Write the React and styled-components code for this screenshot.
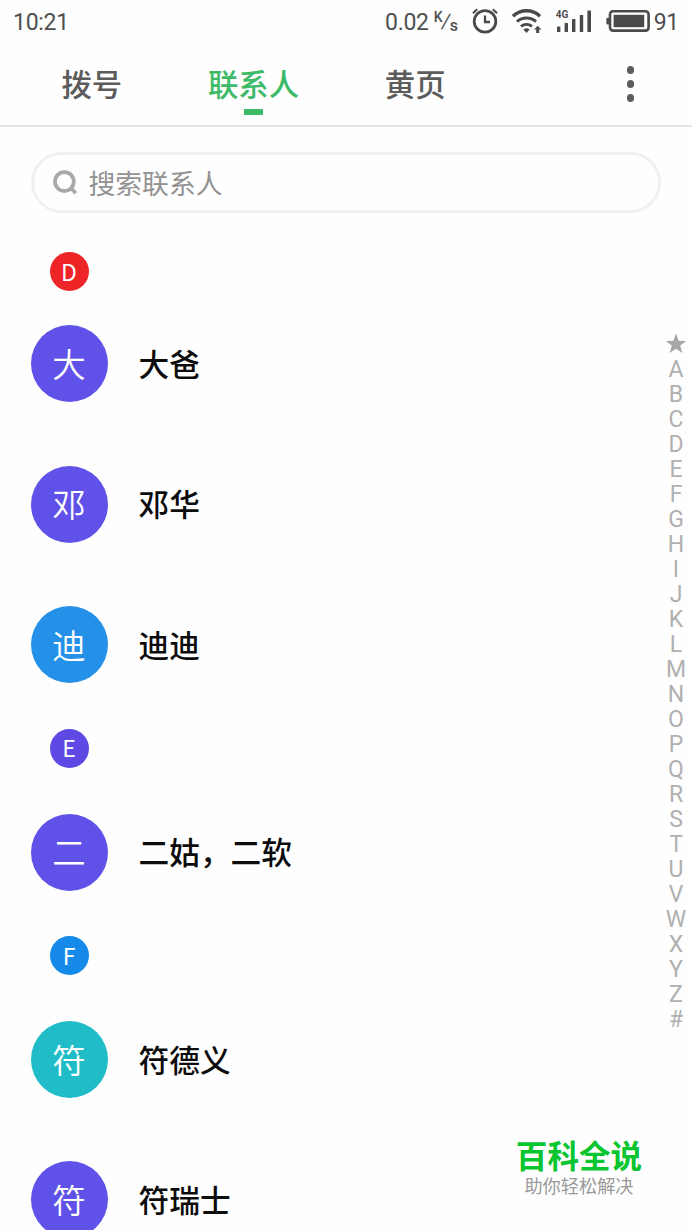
import React from "react";
import styled, { createGlobalStyle } from "styled-components";

const sections = [
  {
    letter: "D",
    color: "#ee2527",
    contacts: [
      { name: "大爸", color: "#6052e8" },
      { name: "邓华", color: "#6052e8" },
      { name: "迪迪", color: "#2590e8" },
    ],
  },
  {
    letter: "E",
    color: "#5f49e4",
    contacts: [{ name: "二姑，二软", color: "#6052e8" }],
  },
  {
    letter: "F",
    color: "#168ae8",
    contacts: [
      { name: "符德义", color: "#20bdc8" },
      { name: "符瑞士", color: "#6052e8" },
    ],
  },
];

const letters = "ABCDEFGHIJKLMNOPQRSTUVWXYZ#".split("");

function AlarmIcon() {
  return (
    <svg width="26" height="26" viewBox="0 0 26 26" fill="none" stroke="#4a4a4a">
      <circle cx="13" cy="13.4" r="10.8" strokeWidth="2.8" />
      <path d="M13 7.6v6.4h5" strokeWidth="2.3" />
      <path d="M1 5.2 5.2 1.2M25 5.2 20.8 1.2" strokeWidth="2" />
    </svg>
  );
}

function WifiIcon() {
  return (
    <svg width="30" height="26" viewBox="0 0 30 26" fill="none" stroke="#4a4a4a">
      <path d="M1 8.2a19.5 19.5 0 0 1 27 0" strokeWidth="3.4" />
      <path d="M5 13.6a14 14 0 0 1 19 0" strokeWidth="3" />
      <path d="M9 18.4a8.6 8.6 0 0 1 11 0" strokeWidth="2.8" />
      <path d="M11.4 21.4a5 5 0 0 1 6.2 0L14.5 25z" fill="#4a4a4a" stroke="none" />
      <path d="M25.7 17.8 29.4 21.6H27.2V25H24.2V21.6H22z" fill="#4a4a4a" stroke="none" />
    </svg>
  );
}

function SignalBars() {
  return (
    <svg width="36" height="24" viewBox="0 0 36 24" fill="#4a4a4a">
      <rect x="1" y="17.6" width="3.4" height="5.4" rx="0.5" />
      <rect x="8.6" y="14" width="3.4" height="9" rx="0.5" />
      <rect x="16" y="10" width="3.4" height="13" rx="0.5" />
      <rect x="23.8" y="6" width="3.4" height="17" rx="0.5" />
      <rect x="31.4" y="1.5" width="3.6" height="21.5" rx="0.5" />
    </svg>
  );
}

function BatteryIcon() {
  return (
    <svg width="44" height="24" viewBox="0 0 44 24">
      <rect x="0.4" y="8.8" width="3" height="6.6" rx="1.2" fill="#4a4a4a" />
      <rect x="4" y="2.2" width="38.6" height="19.4" rx="3" fill="none" stroke="#4a4a4a" strokeWidth="2.6" />
      <rect x="7.6" y="5.8" width="30.6" height="12.4" fill="#4a4a4a" />
    </svg>
  );
}

function App() {
  return (
    <Screen>
      <GlobalStyle />
      <StatusBar>
        <StatusText>10:21</StatusText>
        <StatusRight>
          <StatusText>0.02</StatusText>
          <SpeedUnit>
            <UnitTop>K</UnitTop>
            <UnitSlash>/</UnitSlash>
            <UnitBottom>s</UnitBottom>
          </SpeedUnit>
          <AlarmIcon />
          <WifiIcon />
          <Signal>
            <NetworkType>4G</NetworkType>
            <SignalBars />
          </Signal>
          <Battery>
            <BatteryIcon />
            <StatusText>91</StatusText>
          </Battery>
        </StatusRight>
      </StatusBar>

      <TabBar>
        <Tab>拨号</Tab>
        <Tab $active>联系人</Tab>
        <Tab>黄页</Tab>
        <MoreButton aria-label="更多">
          <Dot />
          <Dot />
          <Dot />
        </MoreButton>
      </TabBar>

      <Body>
        <Content>
          <SearchBox>
            <svg width="26" height="26" viewBox="0 0 26 26" fill="none" stroke="#a9a9a9">
              <circle cx="11.4" cy="11.6" r="9.4" strokeWidth="3.8" />
              <path d="M17.8 18 22.8 23.2" strokeWidth="3.8" />
            </svg>
            <SearchText>搜索联系人</SearchText>
          </SearchBox>
          {sections.map((section, i) => (
            <section key={section.letter}>
              <SectionHead $first={i === 0}>
                <Badge $color={section.color}>{section.letter}</Badge>
              </SectionHead>
              {section.contacts.map((contact) => (
                <ContactRow key={contact.name}>
                  <Avatar $color={contact.color}>{contact.name[0]}</Avatar>
                  <Name>{contact.name}</Name>
                </ContactRow>
              ))}
            </section>
          ))}
        </Content>
        <IndexBar>
          <IndexItem>
            <svg width="22" height="22" viewBox="0 0 22 22" fill="#a6a6a6">
              <path d="M11 0.4l2.6 7.3 7.6.2-6 4.7 2.1 7.5L11 15.7l-6.3 4.4 2.1-7.5-6-4.7 7.6-.2z" />
            </svg>
          </IndexItem>
          {letters.map((letter) => (
            <IndexItem key={letter}>{letter}</IndexItem>
          ))}
        </IndexBar>
      </Body>

      <Watermark>
        <BrandName>百科全说</BrandName>
        <Slogan>助你轻松解决</Slogan>
      </Watermark>
    </Screen>
  );
}

const GlobalStyle = createGlobalStyle`
  * {
    box-sizing: border-box;
  }
  body {
    margin: 0;
    background: #fefefe;
    font-family: Roboto, "Noto Sans CJK SC", sans-serif;
  }
  svg {
    display: block;
    flex-shrink: 0;
  }
`;
const Screen = styled.div`
  position: relative;
  width: 692px;
  height: 1230px;
  overflow: hidden;
  background: #fefefe;
`;
const StatusBar = styled.div`
  height: 42px;
  padding: 0 13px 0 13px;
  display: flex;
  align-items: center;
  justify-content: space-between;
  color: #4f4f4f;
`;
const StatusText = styled.span`
  font-size: 23px;
  line-height: 39px;
  padding-top: 3px;
  letter-spacing: -0.3px;
`;
const StatusRight = styled.div`
  display: flex;
  align-items: center;
  gap: 14px;
`;
const SpeedUnit = styled.span`
  display: flex;
  align-items: center;
  width: 24px;
  margin-left: -9px;
  font-weight: 500;
`;
const UnitTop = styled.span`
  font-size: 14px;
  line-height: 14px;
  margin-bottom: 9px;
`;
const UnitSlash = styled.span`
  font-size: 20px;
  font-weight: 400;
  line-height: 22px;
  margin-left: -1px;
  transform: skewX(-10deg);
`;
const UnitBottom = styled.span`
  font-size: 16px;
  line-height: 16px;
  margin-top: 9px;
`;
const Signal = styled.div`
  position: relative;
`;
const NetworkType = styled.span`
  position: absolute;
  left: 0;
  top: 0;
  font-size: 10px;
  line-height: 11px;
  font-weight: 700;
`;
const Battery = styled.div`
  display: flex;
  align-items: center;
  gap: 4px;
`;
const TabBar = styled.nav`
  height: 85px;
  padding-left: 11px;
  display: flex;
  border-bottom: 2px solid #e6e6e6;
`;
const Tab = styled.div`
  width: 161.7px;
  display: flex;
  flex-direction: column;
  align-items: center;
  font-size: 30.4px;
  font-weight: 500;
  line-height: 42px;
  padding-top: 23px;
  color: ${(props) => (props.$active ? "#3dba68" : "#5c5c5c")};

  &::after {
    content: "";
    width: 19px;
    height: 6px;
    margin-top: 2px;
    background: ${(props) => (props.$active ? "#3dba68" : "transparent")};
  }
`;
const MoreButton = styled.div`
  margin-left: auto;
  margin-right: 58px;
  padding-top: 24px;
  display: flex;
  flex-direction: column;
  gap: 6.5px;
`;
const Dot = styled.span`
  width: 7.5px;
  height: 7.5px;
  border-radius: 50%;
  background: #5c5c5c;
`;
const Body = styled.div`
  display: flex;
`;
const Content = styled.main`
  width: 661px;
  padding: 25px 0 0 30.5px;
`;
const SearchBox = styled.div`
  height: 61px;
  padding-left: 19px;
  display: flex;
  align-items: center;
  gap: 10px;
  border: 3px solid #f0f0f0;
  border-radius: 31px;
`;
const SearchText = styled.span`
  font-size: 26.8px;
  line-height: 40px;
  padding-top: 5px;
  color: #929292;
`;
const SectionHead = styled.div`
  height: ${(props) => (props.$first ? "80.8px" : "67.2px")};
  padding-top: ${(props) => (props.$first ? "39.3px" : "14.2px")};
  padding-left: 19px;
`;
const Badge = styled.div`
  width: 39px;
  height: 39px;
  padding-bottom: 2px;
  border-radius: 50%;
  display: flex;
  align-items: center;
  justify-content: center;
  font-family: "Noto Sans CJK SC", sans-serif;
  font-size: 23px;
  line-height: 34px;
  color: #fff;
  background: ${(props) => props.$color};
`;
const ContactRow = styled.div`
  height: 140.3px;
  display: flex;
  align-items: center;
  gap: 31px;
`;
const Avatar = styled.div`
  width: 77px;
  height: 77px;
  padding-bottom: 2px;
  border-radius: 50%;
  display: flex;
  align-items: center;
  justify-content: center;
  font-family: "Noto Sans CJK SC", sans-serif;
  font-size: 33.5px;
  font-weight: 350;
  line-height: 48px;
  color: #fff;
  background: ${(props) => props.$color};
`;
const Name = styled.span`
  font-family: "Noto Sans CJK SC", sans-serif;
  font-size: 30.7px;
  font-weight: 500;
  line-height: 44px;
  padding-bottom: 2px;
  color: #0c0c0c;
`;
const IndexBar = styled.aside`
  width: 30px;
  padding-top: 204px;
  display: flex;
  flex-direction: column;
`;
const IndexItem = styled.span`
  height: 25px;
  padding-top: 1px;
  display: flex;
  align-items: center;
  justify-content: center;
  font-size: 23px;
  line-height: 25px;
  color: #b0b0b0;
`;
const Watermark = styled.div`
  position: absolute;
  left: 499px;
  top: 1133px;
  width: 160px;
  display: flex;
  flex-direction: column;
  align-items: center;
  font-family: "Noto Sans CJK SC", sans-serif;
`;
const BrandName = styled.strong`
  font-size: 31.6px;
  line-height: 43px;
  color: #09c52f;
`;
const Slogan = styled.span`
  font-size: 18.2px;
  line-height: 19px;
  color: #999;
`;

export default App;
